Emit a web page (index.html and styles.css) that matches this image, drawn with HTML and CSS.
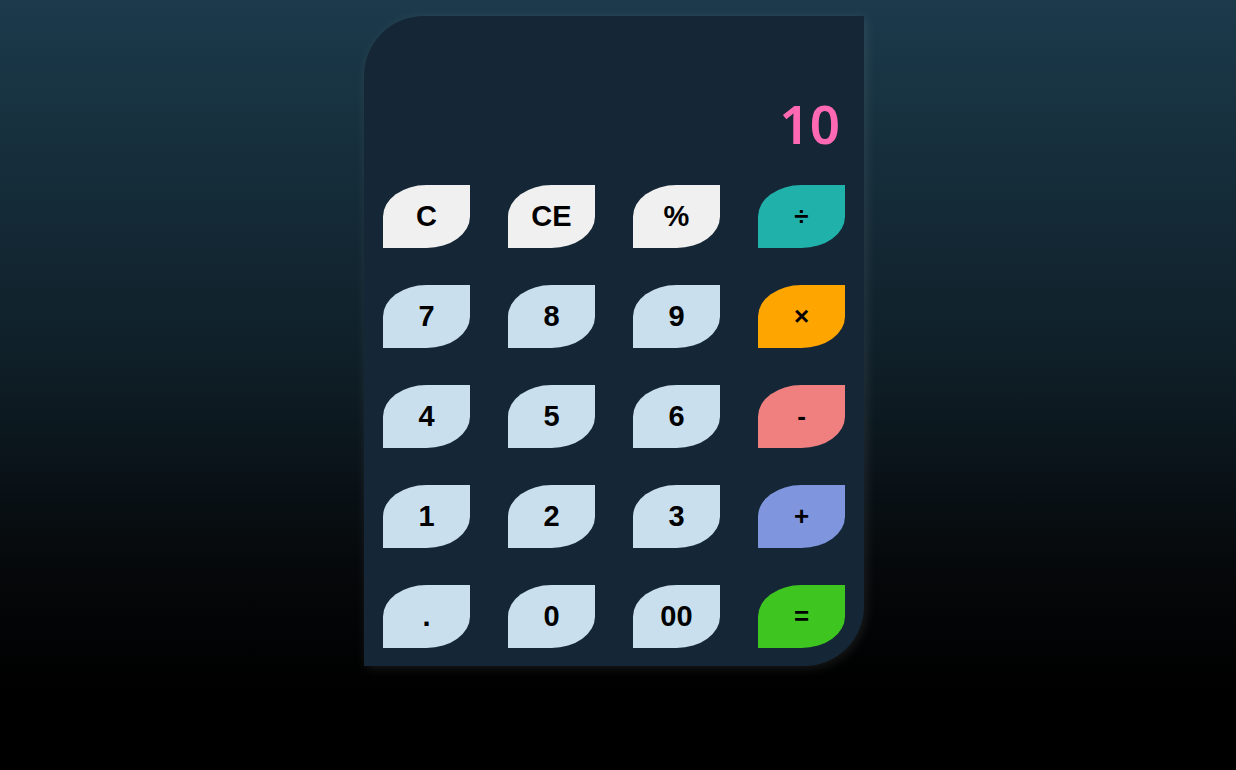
FILE: index.html
```html
<!DOCTYPE html>
<html lang="en">
<head>
<meta charset="utf-8">
<title>Calculator</title>
<link rel="stylesheet" href="styles.css">
</head>
<body>
<div class="page">
  <div class="calculator">
    <div class="display"><span class="value">10</span></div>
    <div class="keys">
      <button class="key fn">C</button>
      <button class="key fn">CE</button>
      <button class="key fn">%</button>
      <button class="key op div">÷</button>

      <button class="key num">7</button>
      <button class="key num">8</button>
      <button class="key num">9</button>
      <button class="key op mul">×</button>

      <button class="key num">4</button>
      <button class="key num">5</button>
      <button class="key num">6</button>
      <button class="key op sub">-</button>

      <button class="key num">1</button>
      <button class="key num">2</button>
      <button class="key num">3</button>
      <button class="key op add">+</button>

      <button class="key num">.</button>
      <button class="key num">0</button>
      <button class="key num">00</button>
      <button class="key op eq">=</button>
    </div>
  </div>
</div>
</body>
</html>
```
FILE: styles.css
```css
html {
  background: #000;
  height: 100%;
}

body {
  margin: 0;
  min-height: 100%;
  background: linear-gradient(180deg, #1b3a4b 0px, #0f1f28 360px, #050709 580px, #000 690px) no-repeat;
  font-family: "Liberation Sans", Arial, sans-serif;
}

.page {
  display: flex;
  justify-content: center;
  padding: 16px 8px 0 0;
}

.calculator {
  width: 500px;
  height: 650px;
  box-sizing: border-box;
  padding: 19px 19px 18px;
  background: #152736;
  border-radius: 60px 0 60px 0;
  box-shadow: 2px 2px 12px rgba(255, 255, 255, 0.1);
  display: flex;
  flex-direction: column;
}

.display {
  height: 125px;
  margin-bottom: 25px;
  display: flex;
  align-items: flex-end;
  justify-content: flex-end;
  padding-right: 5px;
}

.value {
  font-family: "Noto Sans", "Open Sans", sans-serif;
  font-weight: 600;
  font-size: 53px;
  color: #ff69b4;
}

.keys {
  display: grid;
  grid-template-columns: repeat(4, 87px);
  grid-auto-rows: 63px;
  column-gap: 38px;
  row-gap: 37px;
}

.key {
  border: none;
  padding: 0;
  margin: 0;
  border-radius: 50% 0;
  font-family: "Liberation Sans", Arial, sans-serif;
  font-weight: bold;
  font-size: 29px;
  color: #000;
  cursor: pointer;
}

.op { font-size: 26px; }

.fn { background: #f0f0f0; }
.num { background: #c9dfee; }
.div { background: #20b2aa; }
.mul { background: #ffa500; }
.sub { background: #f08080; }
.add { background: #7f96df; }
.eq { background: #3fc520; }
```
